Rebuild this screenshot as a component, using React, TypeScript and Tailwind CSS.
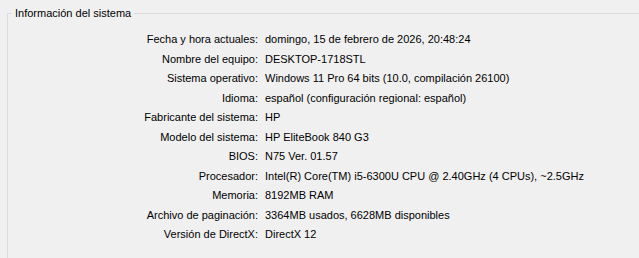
import React from 'react';

const rows: [string, string][] = [
  ['Fecha y hora actuales:', 'domingo, 15 de febrero de 2026, 20:48:24'],
  ['Nombre del equipo:', 'DESKTOP-1718STL'],
  ['Sistema operativo:', 'Windows 11 Pro 64 bits (10.0, compilación 26100)'],
  ['Idioma:', 'español (configuración regional: español)'],
  ['Fabricante del sistema:', 'HP'],
  ['Modelo del sistema:', 'HP EliteBook 840 G3'],
  ['BIOS:', 'N75 Ver. 01.57'],
  ['Procesador:', 'Intel(R) Core(TM) i5-6300U CPU @ 2.40GHz (4 CPUs), ~2.5GHz'],
  ['Memoria:', '8192MB RAM'],
  ['Archivo de paginación:', '3364MB usados, 6628MB disponibles'],
  ['Versión de DirectX:', 'DirectX 12'],
];

const App: React.FC = () => {
  return (
    <div className="w-[639px] h-[258px] overflow-hidden bg-[#f0f0f0] text-[11px] text-black font-['Liberation_Sans',sans-serif]">
      <fieldset className="ml-[7px] mt-[7px] border-l border-t border-[#dcdcdc] p-0 h-[300px]">
        <legend className="ml-[4px] px-[3px] leading-[13px]">Información del sistema</legend>
        <div className="grid grid-cols-[250px_1fr] gap-x-[7px] pt-[10px]">
          {rows.map(([label, value]) => (
            <React.Fragment key={label}>
              <div className="h-[19.5px] leading-[19.5px] text-right whitespace-nowrap">{label}</div>
              <div className="h-[19.5px] leading-[19.5px] whitespace-nowrap">{value}</div>
            </React.Fragment>
          ))}
        </div>
      </fieldset>
    </div>
  );
};

export default App;
